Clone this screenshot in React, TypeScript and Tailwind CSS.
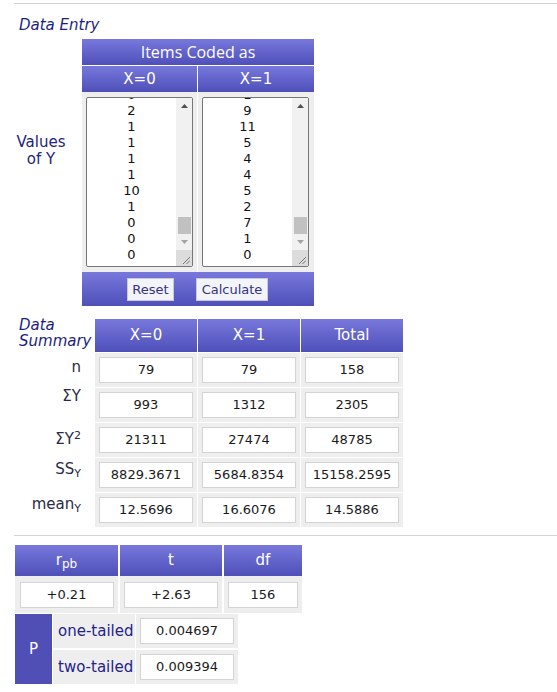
import React from "react";

const head = "bg-gradient-to-b from-[#7878dc] to-[#4f4fb9] text-white";

const Box = ({ value, w = "w-[94px]" }: { value: string; w?: string }) => (
  <div
    className={`${w} flex h-[26px] items-center justify-center border border-[#d4d4d4] bg-white text-[13px] text-[#1a1a1a]`}
  >
    {value}
  </div>
);

const FakeTextarea = ({ values }: { values: string[] }) => (
  <div className="flex h-[170px] w-[107px] overflow-hidden rounded-[2px] border border-[#767676] bg-white">
    <div className="flex-1 overflow-hidden">
      <div className="-mt-[11px] text-center text-[13px] leading-[16px] text-[#111]">
        {values.map((v, i) => (
          <div key={i}>{v}</div>
        ))}
      </div>
    </div>
    <div className="flex w-[16px] flex-col bg-[#f1f1f1]">
      <div className="flex h-[16px] items-center justify-center">
        <svg width="7" height="4" viewBox="0 0 7 4">
          <path d="M0 4 L3.5 0 L7 4 Z" fill="#505050" />
        </svg>
      </div>
      <div className="flex-1" />
      <div className="mx-auto h-[17px] w-[13px] bg-[#c1c1c1]" />
      <div className="flex h-[16px] items-center justify-center">
        <svg width="7" height="4" viewBox="0 0 7 4">
          <path d="M0 0 L7 0 L3.5 4 Z" fill="#a3a3a3" />
        </svg>
      </div>
      <div className="flex h-[16px] items-end justify-end bg-[#dcdcdc] p-[2px]">
        <svg width="8" height="8" viewBox="0 0 8 8">
          <path d="M1 8 L8 1 M4.5 8 L8 4.5" stroke="#777" strokeWidth="1" />
        </svg>
      </div>
    </div>
  </div>
);

const summary: { label: React.ReactNode; cls: string; vals: string[] }[] = [
  { label: "n", cls: "pt-[6px]", vals: ["79", "79", "158"] },
  { label: <>&Sigma;Y</>, cls: "pt-[0px]", vals: ["993", "1312", "2305"] },
  {
    label: (
      <>
        &Sigma;Y<sup className="text-[11px]">2</sup>
      </>
    ),
    cls: "pt-[8px]",
    vals: ["21311", "27474", "48785"],
  },
  {
    label: (
      <>
        SS<sub className="text-[11px]">Y</sub>
      </>
    ),
    cls: "pt-[3px]",
    vals: ["8829.3671", "5684.8354", "15158.2595"],
  },
  {
    label: (
      <>
        mean<sub className="text-[11px]">Y</sub>
      </>
    ),
    cls: "pt-[3px]",
    vals: ["12.5696", "16.6076", "14.5886"],
  },
];

export default function App() {
  return (
    <div className="w-[557px] bg-white pt-[3px] font-['DejaVu_Sans',sans-serif]">
      <div className="ml-[14px] h-px bg-[#d3d3d3]" />
      <div className="ml-[19px] mt-[12px] h-[18px] text-[15px] italic leading-[18px] text-[#1e1e7e]">
        Data Entry
      </div>

      {/* data entry */}
      <div className="mt-[5px] flex">
        <div className="w-[82px] pt-[95px] text-center text-[15px] leading-[17px] text-[#24247a]">
          Values
          <br />
          of Y
        </div>
        <div className="w-[232px]">
          <div
            className={`${head} flex h-[26px] items-center justify-center font-['Open_Sans',sans-serif] text-[16px]`}
          >
            Items Coded as
          </div>
          <div className="mt-px grid grid-cols-[115px_116px] gap-x-px">
            <div className={`${head} flex h-[26px] items-center justify-center text-[15px]`}>X=0</div>
            <div className={`${head} flex h-[26px] items-center justify-center text-[15px]`}>X=1</div>
          </div>
          <div className="grid grid-cols-[115px_116px] gap-x-px">
            <div className="h-[180px] bg-[#eeeeee] pl-[4px] pt-[5px]">
              <FakeTextarea values={["0", "2", "1", "1", "1", "1", "10", "1", "0", "0", "0"]} />
            </div>
            <div className="h-[180px] bg-[#eeeeee] pl-[4px] pt-[5px]">
              <FakeTextarea values={["1", "9", "11", "5", "4", "4", "5", "2", "7", "1", "0"]} />
            </div>
          </div>
          <div className={`${head} flex h-[34px] items-center gap-[22px] pl-[45px] pt-px`}>
            <button className="h-[23px] w-[47px] border border-[#c9c9dc] bg-[#f3f3fa] text-[13px] text-[#34347e]">
              Reset
            </button>
            <button className="h-[23px] w-[72px] border border-[#c9c9dc] bg-[#f3f3fa] text-[13px] text-[#34347e]">
              Calculate
            </button>
          </div>
        </div>
      </div>

      {/* data summary */}
      <div className="ml-[14px] mt-[13px] grid grid-cols-[80px_102px_102px_102px] gap-px">
        <div className="flex h-[33px] items-center pl-[5px] text-[15px] italic leading-[16px] text-[#1e1e7e]">
          <div className="-mt-[6px]">
            Data
            <br />
            Summary
          </div>
        </div>
        {["X=0", "X=1", "Total"].map((h) => (
          <div key={h} className={`${head} flex h-[33px] items-center justify-center text-[15px]`}>
            {h}
          </div>
        ))}
        {summary.map((r, i) => (
          <React.Fragment key={i}>
            <div className={`h-[34px] pr-[13px] text-right text-[15px] leading-[16px] text-[#2a2a44] ${r.cls}`}>
              {r.label}
            </div>
            {r.vals.map((v, j) => (
              <div key={j} className="flex h-[34px] items-center justify-center bg-[#eeeeee]">
                <Box value={v} />
              </div>
            ))}
          </React.Fragment>
        ))}
      </div>

      <div className="ml-[14px] mt-[8px] h-px bg-[#d3d3d3]" />

      {/* results */}
      <div className="ml-[15px] mt-[9px] grid w-fit grid-cols-[103px_102px_78px] gap-x-[2px]">
        <div className={`${head} flex h-[31px] items-center justify-center text-[15px]`}>
          r<sub className="text-[12px]">pb</sub>
        </div>
        <div className={`${head} flex h-[31px] items-center justify-center text-[15px]`}>t</div>
        <div className={`${head} flex h-[31px] items-center justify-center text-[15px]`}>df</div>
        <div className="flex h-[37px] items-center justify-center bg-[#eeeeee]">
          <Box value="+0.21" />
        </div>
        <div className="flex h-[37px] items-center justify-center bg-[#eeeeee]">
          <Box value="+2.63" />
        </div>
        <div className="flex h-[37px] items-center justify-center bg-[#eeeeee]">
          <Box value="156" w="w-[70px]" />
        </div>
      </div>

      <div className="ml-[15px] mt-px grid w-fit grid-cols-[37px_82px_102px] grid-rows-[34px_34px] gap-x-px gap-y-[2px]">
        <div className="row-span-2 flex items-center justify-center bg-[#4f4fb5] text-[15px] text-white">P</div>
        <div className="flex items-center bg-[#eeeeee] pl-[5px] text-[15px] text-[#23238a]">one-tailed</div>
        <div className="flex items-center justify-center bg-[#eeeeee]">
          <Box value="0.004697" />
        </div>
        <div className="flex items-center bg-[#eeeeee] pl-[5px] text-[15px] text-[#23238a]">two-tailed</div>
        <div className="flex items-center justify-center bg-[#eeeeee]">
          <Box value="0.009394" />
        </div>
      </div>
    </div>
  );
}
